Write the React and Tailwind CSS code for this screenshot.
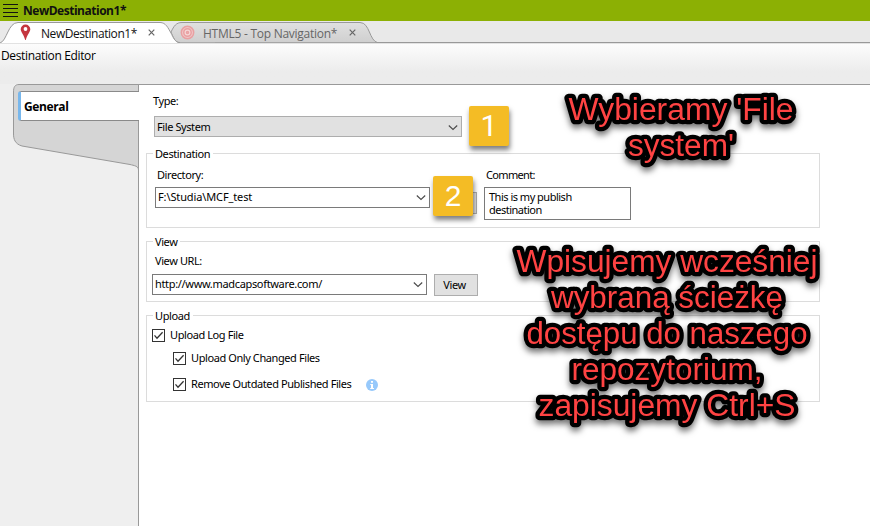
import React from "react";

const tahoma = "font-['Noto_Sans','Open_Sans',sans-serif] text-[11px] tracking-[-0.41px] whitespace-nowrap text-black";

function Chevron() {
  return (
    <svg className="mr-[3px] shrink-0" width="10" height="7" viewBox="0 0 10 7" fill="none" stroke="#4a4a4a" strokeWidth="1.1">
      <path d="M0.8 1.5 L5 5.5 L9.2 1.5" />
    </svg>
  );
}

function Combo({ children, className }) {
  return (
    <div className={`flex h-[21px] items-center justify-between border pl-[2px] ${className}`}>
      <span>{children}</span>
      <Chevron />
    </div>
  );
}

function Group({ title, className, children }) {
  return (
    <section className={`relative ml-[7px] w-[674px] border border-[#dcdcdc] ${className}`}>
      <h2 className="absolute left-[6px] top-[-8px] bg-white pl-[2px] pr-[3px] leading-[15px]">{title}</h2>
      {children}
    </section>
  );
}

function Check({ children, className }) {
  return (
    <div className={`flex h-[14px] items-center gap-[5px] ${className}`}>
      <svg className="shrink-0" width="13" height="13" viewBox="0 0 13 13" fill="none" stroke="#333">
        <rect x="0.5" y="0.5" width="12" height="12" />
        <path d="M2.5 6.4 L5 9.2 L10.6 3.3" strokeWidth="1.3" />
      </svg>
      <span className="pt-px">{children}</span>
    </div>
  );
}

function Badge({ children, className }) {
  return (
    <div className={`absolute flex h-[40px] w-[40px] items-center justify-center rounded-[2px] bg-[#f4bc25] text-[30px] leading-none text-white shadow-[1px_4px_5px_rgba(0,0,0,0.5)] ${className}`}>
      {children}
    </div>
  );
}

function Note({ lines, width, className }) {
  return (
    <svg
      className={`absolute overflow-visible font-['Liberation_Sans',Arial,sans-serif] text-[31px] drop-shadow-[0_4px_3px_rgba(0,0,0,0.55)] ${className}`}
      width={width}
      height={lines.length * 36}
      textAnchor="middle"
      fill="#ff4343"
      stroke="#000"
      strokeWidth="8.5"
      strokeLinejoin="round"
      strokeLinecap="round"
      paintOrder="stroke"
    >
      {lines.map(([text, length], i) => (
        <text key={text} x={width / 2} y={28.5 + i * 36} textLength={length} lengthAdjust="spacingAndGlyphs">
          {text}
        </text>
      ))}
    </svg>
  );
}

function CloseMark() {
  return (
    <svg width="7" height="7" viewBox="0 0 7 7" stroke="#666" strokeWidth="1.2">
      <path d="M0.7 0.7 L6.3 6.3 M6.3 0.7 L0.7 6.3" />
    </svg>
  );
}

function TabBar() {
  return (
    <nav className="relative h-[23px] bg-[#e9e9e9] font-['Open_Sans','Noto_Sans',sans-serif] text-[12px]">
      <svg className="absolute left-0 top-0" width="870" height="23" viewBox="0 0 870 23" fill="none">
        <defs>
          <linearGradient id="inactive" x1="0" y1="0" x2="0" y2="1">
            <stop offset="0" stopColor="#e0e0e0" />
            <stop offset="1" stopColor="#cfcfcf" />
          </linearGradient>
        </defs>
        <path d="M215 21.5 H870" stroke="#999" />
        <path d="M171 11 C174 5 176 1.500 182 1.500 H360 C370 1.500 369 20 378 21.800 H179 C175 21.500 173 16 171 11Z" fill="url(#inactive)" stroke="#999" />
        <path d="M0 22 C7 20 8 1.500 18 1.500 H160 C168 1.500 168 8 171 12 C173 16 175 22 180 22.500 H0Z" fill="#fff" />
        <path d="M0 22 C7 20 8 1.500 18 1.500 H160 C166 1.500 168 7 171 12 C173 16 175 21.500 180 21.500" stroke="#999" />
        <path d="M0 22.500 H870" stroke="#e2e2e2" />
      </svg>
      <div className="relative flex h-[23px] items-center">
        <svg className="ml-[20px]" width="11" height="17" viewBox="0 0 11 17">
          <path d="M5.5 0.5 A4.8 4.8 0 0 0 0.7 5.3 C0.7 8 4 11 5.2 16 H5.8 C7 11 10.3 8 10.3 5.3 A4.8 4.8 0 0 0 5.5 .5Z" fill="#c5363f" />
          <circle cx="5.5" cy="5" r="1.9" fill="#fff" />
        </svg>
        <span className="ml-[10px] mt-[2px] w-[107px] tracking-[-0.44px] text-[#111]">NewDestination1*</span>
        <CloseMark />
        <svg className="ml-[25px]" width="15" height="15" viewBox="0 0 15 15" fill="none" stroke="#e9a0a2" strokeWidth="1.5">
          <circle cx="7.5" cy="7.5" r="6.2" fill="#f0c6c7" />
          <circle cx="7.5" cy="7.5" r="3.700" fill="#f5d6d6" />
          <circle cx="7.5" cy="7.5" r="1" />
        </svg>
        <span className="ml-[8px] mt-[2px] w-[146px] tracking-[-0.26px] text-[#666]">HTML5 - Top Navigation*</span>
        <CloseMark />
      </div>
    </nav>
  );
}

export default function App() {
  return (
    <div className="relative flex h-[526px] w-[870px] flex-col overflow-hidden bg-white">
      <header className="flex h-[21px] items-center bg-[#8cb004]">
        <svg className="ml-[3px]" width="15" height="21" stroke="#111" strokeWidth="1">
          <path d="M0 4.5 H15 M0 8.5 H15 M0 12.5 H15 M0 16.5 H15" />
        </svg>
        <h1 className="ml-[5px] font-['Open_Sans',sans-serif] text-[12px] font-bold leading-[21px] tracking-[-0.48px] text-[#111]">NewDestination1*</h1>
      </header>
      <TabBar />
      <div className="flex h-[40px] bg-gradient-to-b from-[#fcfcfc] to-[#ececec] to-70% pl-[1px] pt-[4px] font-['Open_Sans',sans-serif] text-[12px] leading-[16px] tracking-[-0.36px] text-black">
        Destination Editor
      </div>
      <div className="flex flex-1">
        <aside className="relative w-[138px] shrink-0 bg-[#efefef]">
          <svg className="absolute left-0 top-0" width="139" height="100" viewBox="0 0 139 100" fill="none">
            <path d="M138.5 86 C138.5 82 134 81.500 130 80.500 L22 62 C15 60 13.500 55 13.500 50 V8 C13.500 3 15 .5 19 .5 H138.500Z" fill="#d5d5d5" stroke="#999" />
          </svg>
          <div className="relative ml-[18px] mt-[7px] flex h-[30px] w-[121px] items-center rounded-l-[3px] border-y border-l-[3px] border-y-[#8a8a8a] border-l-[#78b7ec] bg-white pl-[3px] pt-[2px] font-['Open_Sans',sans-serif] text-[12px] font-bold tracking-[-0.38px] text-black">
            General
          </div>
        </aside>
        <main className={`flex-1 border-l border-t border-[#999] bg-white ${tahoma}`}>
          <div className="ml-[14px] mt-[9px] h-[14px] leading-[14px]">Type:</div>
          <Combo className="ml-[15px] mt-[8px] w-[308px] border-[#adadad] bg-[#e1e1e1] pt-px">File System</Combo>
          <Group title="Destination" className="mt-[16px] h-[75px]">
            <div className="flex pl-[8px] pt-[14px]">
              <div className="w-[329px]">
                <div className="h-[19px] pl-[2px] leading-[14px]">Directory:</div>
                <Combo className="w-[275px] border-[#7a7a7a] tracking-[-0.12px]">F:\Studia\MCF_test</Combo>
              </div>
              <div>
                <div className="h-[19px] pl-[2px] leading-[14px] tracking-[-0.66px]">Comment:</div>
                <div className="h-[33px] w-[147px] border border-[#7a7a7a] pl-[4px] pt-[2px] leading-[13px] tracking-[-0.5px]">
                  This is my publish
                  <br />
                  destination
                </div>
              </div>
            </div>
            <div className="absolute left-[300px] top-[38px] h-[22px] w-[30px] border border-[#adadad] bg-[#e1e1e1]" />
          </Group>
          <Group title="View" className="mt-[13px] h-[61px]">
            <div className="h-[32px] pl-[8px] pt-[12px] leading-[14px]">View URL:</div>
            <div className="flex gap-[7px] pl-[5px]">
              <Combo className="w-[275px] border-[#7a7a7a] tracking-[-0.33px]">http://www.madcapsoftware.com/</Combo>
              <div className="flex h-[22px] w-[44px] items-center justify-center border border-[#adadad] bg-[#e1e1e1] pr-[3px]">View</div>
            </div>
          </Group>
          <Group title="Upload" className="mt-[13px] h-[87px]">
            <Check className="ml-[5px] mt-[12px]">Upload Log File</Check>
            <Check className="ml-[26px] mt-[9px]">Upload Only Changed Files</Check>
            <div className="mt-[12px] flex items-center">
              <Check className="ml-[26px] w-[193px]">Remove Outdated Published Files</Check>
              <svg className="relative top-px" width="12" height="12" viewBox="0 0 12 12">
                <circle cx="6" cy="6" r="6" fill="#97c9fb" />
                <path d="M5 2 H7 V3.800 H5Z M4.300 5 H7 V9 H8 V10 H4.200 V9 H5 V6 H4.300Z" fill="#fff" />
              </svg>
            </div>
          </Group>
        </main>
      </div>
      <Badge className="left-[469px] top-[106px] font-['Roboto',sans-serif]">1</Badge>
      <Badge className="left-[433px] top-[176px] font-['Liberation_Sans',Arial,sans-serif]">2</Badge>
      <Note className="left-[568px] top-[91px]" width={226} lines={[["Wybieramy 'File", 225], ["system'", 106]]} />
      <Note className="left-[516px] top-[243px]" width={302} lines={[["Wpisujemy wcześniej", 301], ["wybraną ścieżkę", 232], ["dostępu do naszego", 281], ["repozytorium,", 191], ["zapisujemy Ctrl+S", 257]]} />
    </div>
  );
}
